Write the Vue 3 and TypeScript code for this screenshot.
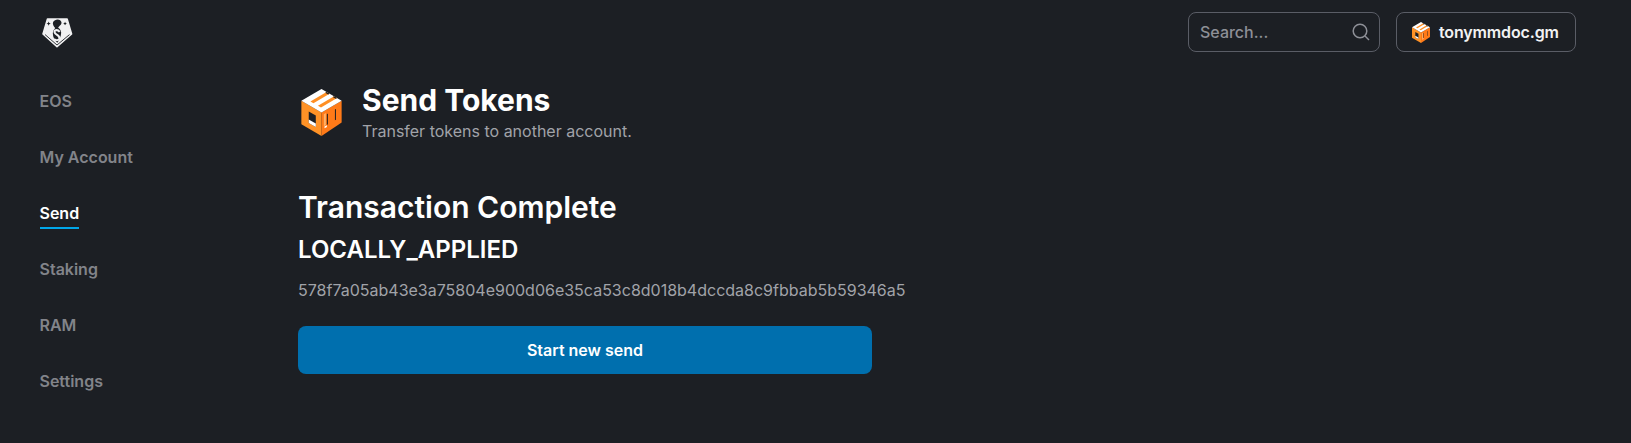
<script setup lang="ts">
const navItems: string[] = ['EOS', 'My Account', 'Send', 'Staking', 'RAM', 'Settings']
</script>

<template>
  <div class="page">
    <svg class="sprite" width="0" height="0" aria-hidden="true">
      <symbol id="cube-mark" viewBox="15 10 120 140">
        <path fill="#ff9226" d="M15 45 75 80v70L15 115Z" />
        <path fill="#ff7a18" d="M75 80 135 45v65L75 150Z" />
        <path fill="#ffffff" d="M15 45 75 10l60 35-60 35Z" />
        <path fill="#ff8f24" d="M42 47 90 18.800l9 5.200-48 28.200ZM64.500 60 112.500 31.900l9 5.200-48 28.200Z" />
        <path fill="#1c1f24" d="M86 21.100l4-2.300 9 5.200-4 2.300ZM108.500 34.200l4-2.300 9 5.200-4 2.300Z" />
        <path fill="#1c1f24" d="M37 77 58 89v34L37 111Z" />
        <path fill="#ffffff" d="M37 101 58 113v10L37 111Z" />
        <path fill="#1c1f24" d="M91 85l3-1.700v32l-3 1.700ZM115 71l3-1.700v32l-3 1.700Z" />
        <path fill="#ffffff" d="M84 122l7-4v5l-7 4Z" />
        <path fill="#ffb066" d="M82 85l6-3.500v36l-6 3.500Z" />
      </symbol>
    </svg>

    <header class="topbar">
      <svg class="logo" viewBox="0 0 114 120" aria-label="logo">
        <path fill="#f1f1f2" stroke="#f1f1f2" stroke-width="5" stroke-linejoin="round" d="M25 20H91L106 70 57 113 10 70Z" />
        <path fill="none" stroke="#1c1f24" stroke-width="3" d="M17 72 57 107 99 72" />
        <path fill="#1c1f24" d="M44 30C50 18 70 18 72 31 73 40 64 43 61 49 66 52 71 58 71 66 70 78 66 90 58 99 50 92 43 80 43 68 43 60 47 55 51 50 46 45 41 37 44 30Z" />
        <path fill="none" stroke="#f1f1f2" stroke-width="7" d="M66 63C58 53 44 57 50 67 54 74 67 75 65 85 63 93 52 92 47 87" />
        <path fill="#1c1f24" d="M29 28l2 5 5 2-5 2-2 5-2-5-5-2 5-2ZM84 29l2 4 4 2-4 2-2 4-2-4-4-2 4-2Z" />
      </svg>
      <div class="actions">
        <label class="search">
          <span class="search-text">Search...</span>
          <svg class="search-icon" viewBox="0 0 20 20">
            <circle cx="10" cy="9" r="6.800" />
            <path d="M15 14l4 4" />
          </svg>
        </label>
        <button class="account" type="button">
          <svg class="cube-small" viewBox="0 0 18 21"><use href="#cube-mark" width="18" height="21" /></svg>
          <span>tonymmdoc.gm</span>
        </button>
      </div>
    </header>

    <div class="body">
      <nav class="sidebar">
        <a v-for="item in navItems" :key="item" class="nav-item" :class="{ active: item === 'Send' }">{{ item }}</a>
      </nav>

      <main class="content">
        <section class="heading">
          <svg class="cube-large" viewBox="0 0 41 47"><use href="#cube-mark" width="41" height="47" /></svg>
          <div class="heading-text">
            <h1>Send Tokens</h1>
            <p>Transfer tokens to another account.</p>
          </div>
        </section>

        <h2>Transaction Complete</h2>
        <h3>LOCALLY_APPLIED</h3>
        <p class="hash">578f7a05ab43e3a75804e900d06e35ca53c8d018b4dccda8c9fbbab5b59346a5</p>
        <button class="primary" type="button">Start new send</button>
      </main>
    </div>
  </div>
</template>

<style>
html, body { margin: 0; background: #1c1f24; }
</style>

<style scoped>
.page {
  width: 1631px;
  height: 443px;
  overflow: hidden;
  background: #1c1f24;
  color: #fff;
  font-family: Inter, "Liberation Sans", sans-serif;
  box-sizing: border-box;
}
.sprite { position: absolute; }
.topbar {
  display: flex;
  align-items: center;
  justify-content: space-between;
  height: 64px;
  padding: 0 55px 0 40px;
}
.logo { width: 34px; height: 36px; margin-top: -2px; }
.actions { display: flex; gap: 16px; }
.search, .account {
  display: flex;
  align-items: center;
  height: 40px;
  box-sizing: border-box;
  border: 1px solid #5a5d66;
  border-radius: 8px;
  background: transparent;
}
.search {
  width: 192px;
  padding: 0 9px 0 11px;
  justify-content: space-between;
}
.search-text { font-size: 16px; font-weight: 500; color: #8e9097; }
.search-icon { width: 20px; height: 20px; fill: none; stroke: #8e9097; stroke-width: 1.500; }
.account {
  width: 180px;
  padding: 0 15px;
  gap: 9px;
  color: #f2f2f3;
  font: 600 16px Inter, "Liberation Sans", sans-serif;
  letter-spacing: -0.15px;
}
.cube-small { display: block; flex: none; width: 18px; height: 21px; }
.cube-large { display: block; flex: none; width: 41px; height: 47px; }
.body { display: flex; }
.sidebar {
  width: 298px;
  padding: 25px 0 0 39.500px;
  box-sizing: border-box;
  flex: none;
  display: flex;
  flex-direction: column;
  align-items: flex-start;
  gap: 32px;
}
.nav-item {
  height: 24px;
  line-height: 24px;
  font-size: 16px;
  font-weight: 600;
  color: #82848a;
  position: relative;
}
.nav-item.active { color: #fff; }
.nav-item.active::after {
  content: "";
  position: absolute;
  left: 0;
  right: 0;
  bottom: -4px;
  height: 2px;
  background: #00a6e8;
}
.content { width: 574px; }
.heading {
  display: flex;
  align-items: center;
  gap: 20px;
  padding: 18px 0 0 3px;
}
h1 { margin: 0; font-size: 30px; line-height: 36px; font-weight: 700; }
.heading-text p { margin: 1px 0 0; font-size: 16px; line-height: 24px; color: #a1a3a9; }
h2 { margin: 46px 0 0; font-size: 30px; line-height: 36px; font-weight: 600; }
h3 { margin: 9px 0 0; font-size: 24px; line-height: 32px; font-weight: 600; }
.hash { margin: 12px 0 0; font-size: 16px; line-height: 24px; color: #a1a3a9; white-space: nowrap; }
.primary {
  display: block;
  width: 574px;
  height: 48px;
  margin-top: 24px;
  border: 0;
  border-radius: 8px;
  background: #006fae;
  color: #fff;
  font: 600 16px Inter, "Liberation Sans", sans-serif;
}
</style>
